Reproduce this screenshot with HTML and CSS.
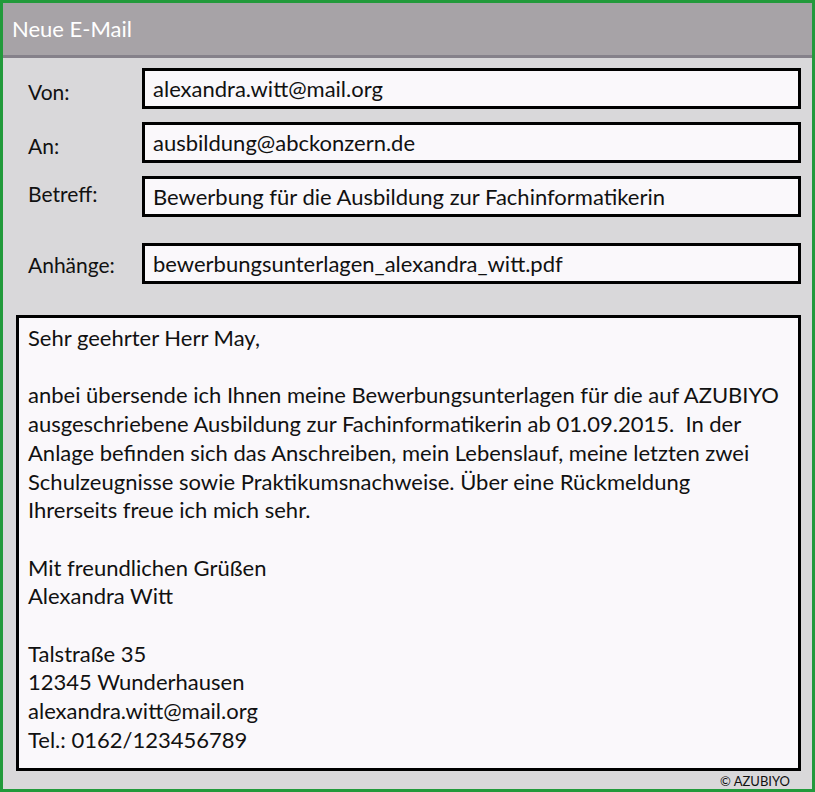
FILE: index.html
```html
<!DOCTYPE html>
<html lang="de">
<head>
  <meta charset="UTF-8">
  <title>Neue E-Mail</title>
  <link rel="stylesheet" href="styles.css">
</head>
<body>
  <div class="mail-window">
    <div class="title-bar">Neue E-Mail</div>

    <div class="fields">
      <div class="field-row">
        <label class="field-label">Von:</label>
        <div class="field-box">alexandra.witt@mail.org</div>
      </div>
      <div class="field-row">
        <label class="field-label">An:</label>
        <div class="field-box">ausbildung@abckonzern.de</div>
      </div>
      <div class="field-row subject">
        <label class="field-label">Betreff:</label>
        <div class="field-box">Bewerbung für die Ausbildung zur Fachinformatikerin</div>
      </div>
      <div class="field-row attach">
        <label class="field-label">Anhänge:</label>
        <div class="field-box">bewerbungsunterlagen_alexandra_witt.pdf</div>
      </div>
    </div>

    <div class="message">
      <p>Sehr geehrter Herr May,</p>
      <p>anbei übersende ich Ihnen meine Bewerbungsunterlagen für die auf AZUBIYO<br>
      ausgeschriebene Ausbildung zur Fachinformatikerin ab 01.09.2015.&nbsp; In der<br>
      Anlage befinden sich das Anschreiben, mein Lebenslauf, meine letzten zwei<br>
      Schulzeugnisse sowie Praktikumsnachweise. Über eine Rückmeldung<br>
      Ihrerseits freue ich mich sehr.</p>
      <p>Mit freundlichen Grüßen<br>
      Alexandra Witt</p>
      <p>Talstraße 35<br>
      12345 Wunderhausen<br>
      alexandra.witt@mail.org<br>
      Tel.: 0162/123456789</p>
    </div>

    <div class="copyright">© AZUBIYO</div>
  </div>
</body>
</html>
```

FILE: styles.css
```css
body {
  margin: 0;
  font-family: Lato, "Open Sans", sans-serif;
  color: #111;
}
.mail-window {
  width: 815px;
  height: 792px;
  box-sizing: border-box;
  border: 3px solid #229a3b;
  background: #d9d8da;
  display: flex;
  flex-direction: column;
}
.title-bar {
  height: 52px;
  background: #a7a3a7;
  border-bottom: 3px solid #85818a;
  color: #fff;
  font-size: 22px;
  line-height: 52px;
  padding-left: 9px;
}
.fields {
  padding: 10px 11px 0 25px;
  display: flex;
  flex-direction: column;
  gap: 13px;
}
.field-row {
  display: flex;
  align-items: center;
}
.field-label {
  width: 114px;
  font-size: 21px;
  padding-top: 6px;
}
.field-row.subject .field-label {
  padding-top: 0;
  margin-top: -6px;
}
.field-row.attach {
  margin-top: 13px;
}
.field-row.attach .field-label {
  padding-top: 2px;
}
.field-box {
  flex: 1;
  height: 35px;
  border: 3px solid #000;
  background: #faf8fb;
  font-size: 22px;
  line-height: 35px;
  padding-left: 8px;
  white-space: nowrap;
}
.message {
  margin: 31px 11px 0 13px;
  height: 444px;
  border: 3px solid #000;
  background: #faf8fb;
  font-size: 22px;
  line-height: 28.7px;
  padding: 6px 9px 0;
  white-space: nowrap;
}
.message p {
  margin: 0 0 28.7px;
}
.copyright {
  align-self: flex-end;
  margin: 2px 22px 0 0;
  font-size: 13px;
}
```
